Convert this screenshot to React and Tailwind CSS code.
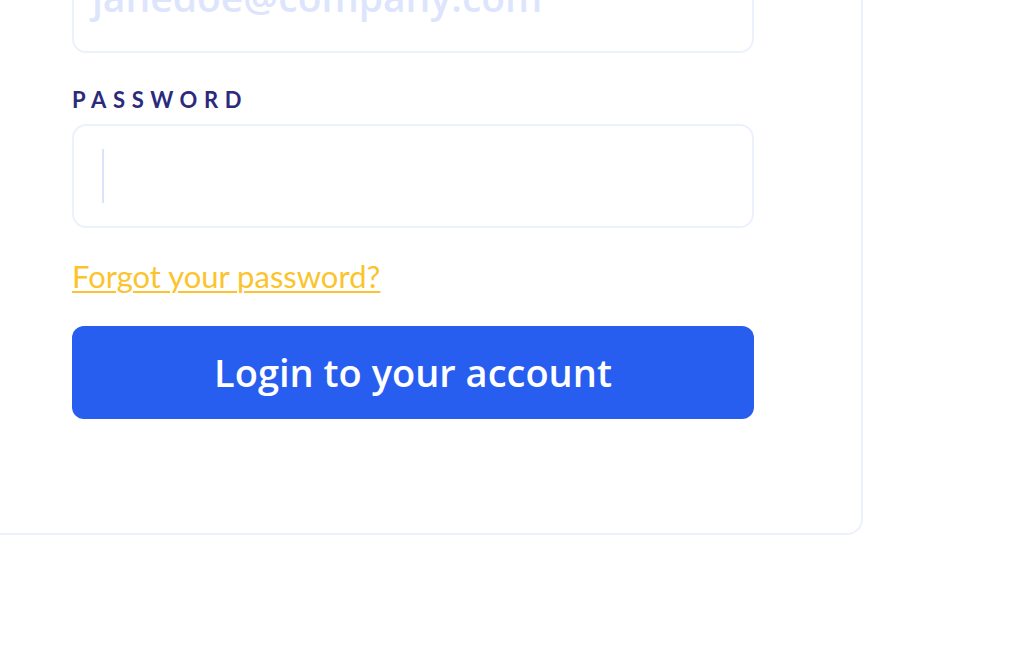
export default function App() {
  return (
    <div className="w-[1024px] h-[665px] overflow-hidden bg-white" style={{ fontFamily: 'Lato, "Noto Sans", sans-serif' }}>
      {/* Login card, page scrolled so only the lower part shows */}
      <div className="ml-[-37px] mt-[-131px] w-[900px] border-2 border-[#edf1fe] rounded-2xl bg-white px-[107px] pt-[40px] pb-[114px]">
        <label className="block text-[22px] leading-[28px] font-bold tracking-[0.3em] uppercase text-[#2c2a7c] mb-[10px]">
          Email
        </label>
        <div className="h-[104px] border-2 border-[#edf1fe] rounded-[14px] flex items-center px-[18px] pb-[8px]">
          <span
            className="text-[39px] leading-[48px] font-semibold text-[#dde5fd]"
            style={{ fontFamily: '"Open Sans", sans-serif' }}
          >
            janedoe@company.com
          </span>
        </div>

        <label className="block mt-[33px] mb-[10px] text-[22px] leading-[28px] font-bold tracking-[0.3em] uppercase text-[#2c2a7c]">
          Password
        </label>
        <div className="h-[104px] border-2 border-[#edf1fe] rounded-[14px] flex items-center px-[28px]">
          <div className="w-[2px] h-[54px] bg-[#dbe4fd]" />
        </div>

        <div className="mt-[29px]">
          <a href="#" className="text-[31px] leading-[38px] text-[#fcc42c] underline underline-offset-[3px] decoration-2">
            Forgot your password?
          </a>
        </div>

        <button
          className="mt-[31px] w-full h-[93px] rounded-[12px] bg-[#275ef0] text-white text-[38px] font-semibold"
          style={{ fontFamily: '"Open Sans", sans-serif' }}
        >
          Login to your account
        </button>
      </div>
    </div>
  )
}
